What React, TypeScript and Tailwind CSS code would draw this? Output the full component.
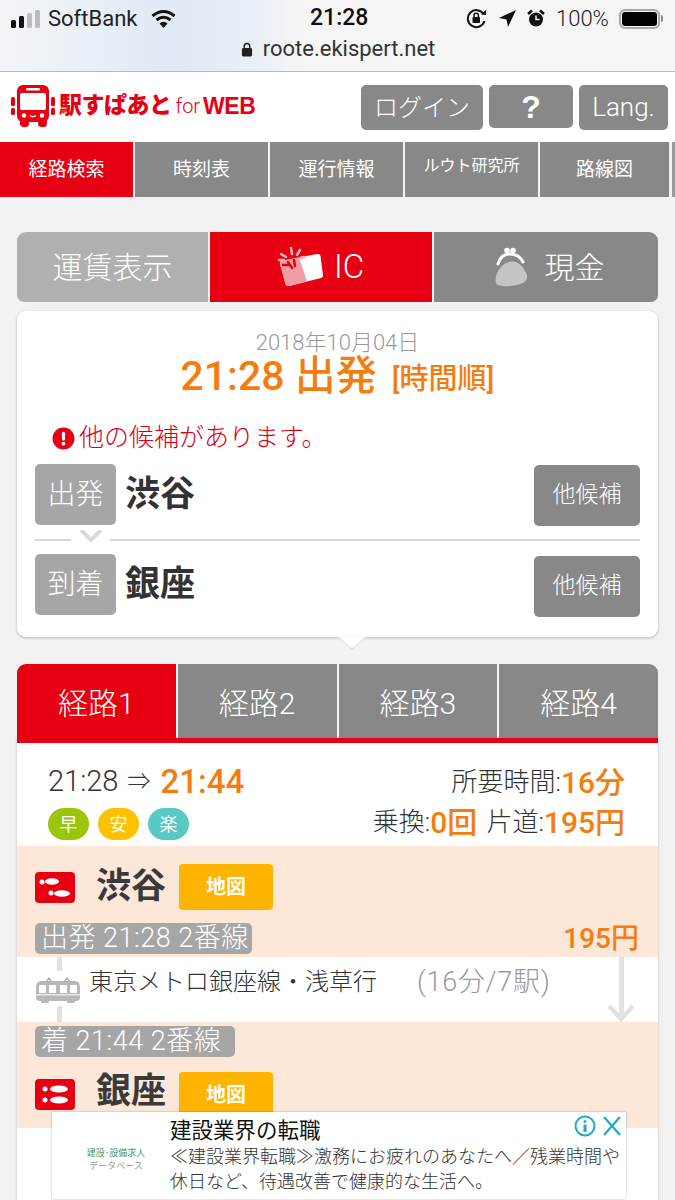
const jp = "font-['Roboto','Noto_Sans_CJK_JP',sans-serif]"

function BusLogo() {
  return (
    <svg width="44" height="42" viewBox="0 0 44 42" className="shrink-0">
      <rect x="0" y="12" width="4" height="9" rx="1.500" fill="#e60012" />
      <rect x="0" y="23" width="4" height="7" rx="1.500" fill="#e60012" />
      <rect x="40" y="12" width="4" height="9" rx="1.500" fill="#e60012" />
      <rect x="40" y="23" width="4" height="7" rx="1.500" fill="#e60012" />
      <rect x="9" y="34" width="9" height="8" rx="3.500" fill="#e60012" />
      <rect x="27" y="34" width="9" height="8" rx="3.500" fill="#e60012" />
      <rect x="6" y="0" width="32" height="37" rx="6" fill="#e60012" />
      <rect x="15" y="3" width="14" height="2.500" rx="1" fill="#fff" />
      <rect x="9" y="8" width="26" height="17" rx="2" fill="#fff" />
      <circle cx="13" cy="30.500" r="2.200" fill="#fff" />
      <circle cx="31" cy="30.500" r="2.200" fill="#fff" />
      <path d="M19 30.500 Q22 33 25 30.500" stroke="#fff" strokeWidth="1.300" fill="none" />
    </svg>
  )
}

function IcCard() {
  return (
    <svg width="46" height="42" viewBox="0 0 46 42">
      <path d="M4 15 L40 8 Q43 7.500 43.500 10 L46 29 Q46.300 31.500 44 32 L12 40 Q9 40.500 8.500 38 L3 18 Q2.500 15.500 4 15 Z" fill="#fff" />
      <path d="M4 15 L22 11.500 L30 35.500 L12 40 Q9 40.500 8.500 38 L3 18 Q2.500 15.500 4 15 Z" fill="#f29ca5" />
      <g stroke="#e60012" strokeWidth="2.500" strokeLinecap="round">
        <path d="M6 19 L12 19" />
        <path d="M11 16 L15 22" />
        <path d="M17 14 L18 20" />
      </g>
      <g stroke="#f7b4ba" strokeWidth="2.500" strokeLinecap="round">
        <path d="M4 8 L9 11" />
        <path d="M2 14 L7 14" />
        <path d="M14 2 L15 8" />
        <path d="M23 4 L20 9" />
        <path d="M28 11 L23 12" />
      </g>
    </svg>
  )
}

function Purse() {
  return (
    <svg width="36" height="40" viewBox="0 0 36 40">
      <circle cx="12" cy="3.500" r="2.800" fill="#fff" />
      <circle cx="18" cy="3.500" r="2.800" fill="#fff" />
      <path d="M3 17 Q6 7 15 7 Q24 7 28 15" stroke="#fff" strokeWidth="3" fill="none" strokeLinecap="round" />
      <path d="M14 15 C22 13 27 19 30 24 C35 31 31 36 22 38 C12 40 3 40 1 36 C-1 29 5 17 14 15 Z" fill="#c4c4c4" />
    </svg>
  )
}

function Steps({ top }: { top?: boolean }) {
  return (
    <svg width="40" height="31" viewBox="0 0 40 31" className="shrink-0">
      <rect width="40" height="31" rx="4" fill="#e60012" />
      {top ? (
        <g fill="#fff">
          <circle cx="7" cy="10" r="2.500" />
          <ellipse cx="17" cy="9.500" rx="7" ry="3.200" />
          <circle cx="16" cy="21" r="2.500" />
          <ellipse cx="27" cy="21.500" rx="8" ry="3.200" />
        </g>
      ) : (
        <g fill="#fff">
          <circle cx="10" cy="10" r="2.500" />
          <ellipse cx="24" cy="10" rx="9" ry="3.500" />
          <circle cx="10" cy="21" r="2.500" />
          <ellipse cx="24" cy="21" rx="9" ry="3.500" />
        </g>
      )}
    </svg>
  )
}

function Train() {
  return (
    <svg width="44" height="27" viewBox="0 0 44 27" className="shrink-0">
      <path d="M10 6 L13 2 L16 6 M28 6 L31 2 L34 6" stroke="#b5b5b5" strokeWidth="1.500" fill="none" />
      <path d="M5 5 H39 Q44 5 44 12 V21 Q44 25 40 25 H4 Q0 25 0 21 V12 Q0 5 5 5 Z" fill="#b8b8b8" />
      <rect x="3" y="9" width="7" height="8" rx="1" fill="#fff" />
      <rect x="13" y="9" width="7" height="8" fill="#fff" />
      <rect x="24" y="9" width="7" height="8" fill="#fff" />
      <rect x="34" y="9" width="7" height="8" rx="1" fill="#fff" />
      <rect x="0" y="18" width="44" height="1.500" fill="#e8e8e8" />
      <rect x="5" y="24" width="8" height="3" rx="1.500" fill="#b8b8b8" />
      <rect x="31" y="24" width="8" height="3" rx="1.500" fill="#b8b8b8" />
    </svg>
  )
}

function NavTab({ label, active, small }: { label: string; active?: boolean; small?: boolean }) {
  return (
    <div
      className={`flex h-full w-[133px] shrink-0 justify-center text-white ${active ? 'bg-[#e60012]' : 'bg-[#888888]'} ${small ? 'pt-[12px] text-[16px]' : 'items-center pt-[2px] text-[19px]'}`}
    >
      {label}
    </div>
  )
}

function RouteTab({ label, active }: { label: string; active?: boolean }) {
  return (
    <div className={`flex flex-1 items-center justify-center pt-[5px] text-[30px] font-light text-white ${active ? 'bg-[#e60012]' : 'bg-[#888888]'}`}>
      {label}
    </div>
  )
}

function Badge({ label, color }: { label: string; color: string }) {
  return (
    <div className={`flex h-[32px] w-[41px] items-center justify-center rounded-full text-[18px] text-white ${color}`}>
      {label}
    </div>
  )
}

function StationRow({ tag, name, btnTop }: { tag: string; name: string; btnTop: string }) {
  return (
    <div className="flex items-start">
      <div className="flex h-[61px] w-[81px] items-center justify-center rounded-[5px] bg-[#a6a6a6] text-[28px] font-light text-white">{tag}</div>
      <div className="ml-[9px] mt-[10px] text-[35px] leading-[42px] font-bold text-[#333333]">{name}</div>
      <div className={`ml-auto flex h-[61px] w-[106px] items-center justify-center rounded-[5px] bg-[#888888] text-[23px] font-light text-white ${btnTop}`}>
        他候補
      </div>
    </div>
  )
}

export default function App() {
  return (
    <div className={`relative h-[1200px] w-[675px] overflow-hidden bg-[#f2f2f2] ${jp}`}>
      {/* ステータスバー */}
      <div className="h-[72px] border-b border-[#b9b9b9] bg-[linear-gradient(90deg,#f3f5f7_0%,#dfeaf6_25%,#e6eef7_35%,#f5f5f5_45%)] text-[#222222]">
        <div className="flex h-[37px] items-center pl-[11px]">
          <div className="flex items-end gap-[3px]">
            <span className="h-[8px] w-[5px] rounded-[1.500px] bg-[#111111]" />
            <span className="h-[12px] w-[5px] rounded-[1.500px] bg-[#111111]" />
            <span className="h-[15px] w-[5px] rounded-[1.500px] bg-[#bcbcbc]" />
            <span className="h-[18px] w-[5px] rounded-[1.500px] bg-[#bcbcbc]" />
          </div>
          <span className="ml-[8px] w-[90px] text-[22px] whitespace-nowrap">SoftBank</span>
          <svg width="25" height="19" viewBox="0 0 25 19" className="ml-[13px]">
            <path d="M12.500 19 L8.500 14.500 Q12.500 11 16.500 14.500 Z" fill="#111" />
            <path d="M5.500 11 Q12.500 5.500 19.500 11" stroke="#111" strokeWidth="3" fill="none" />
            <path d="M1.500 7 Q12.500 -2 23.500 7" stroke="#111" strokeWidth="3" fill="none" />
          </svg>
          <span className="ml-[134px] w-[58px] text-[23px] font-medium whitespace-nowrap text-[#111111]">21:28</span>
          <svg width="21" height="21" viewBox="0 0 21 21" className="ml-[98px]">
            <path d="M17.500 6 A8.500 8.500 0 1 0 18.500 13" stroke="#111" strokeWidth="2" fill="none" />
            <path d="M15 6.500 L20 7 L20 2 Z" fill="#111" />
            <rect x="6.500" y="9" width="7.500" height="6" rx="1" fill="#111" />
            <path d="M8 9 V7.500 a2.200 2.200 0 0 1 4.400 0 V9" stroke="#111" strokeWidth="1.500" fill="none" />
          </svg>
          <svg width="17" height="17" viewBox="0 0 17 17" className="ml-[12px]">
            <path d="M17 0 L0 8 L7.500 9.500 L9 17 Z" fill="#111" />
          </svg>
          <svg width="18" height="19" viewBox="0 0 18 19" className="ml-[11px]">
            <circle cx="9" cy="10.500" r="7" fill="#111" />
            <path d="M9 6.500 V10.500 H12.500" stroke="#f5f5f5" strokeWidth="1.500" fill="none" />
            <path d="M1 5 L5 1.500 M17 5 L13 1.500" stroke="#111" strokeWidth="2.500" />
          </svg>
          <span className="ml-[11px] w-[55px] text-[22px] font-light whitespace-nowrap">100%</span>
          <div className="ml-[8px] flex h-[20px] w-[41px] items-center rounded-[6px] border-2 border-[#a8a8a8] p-[1px]">
            <div className="h-full w-full rounded-[3px] bg-black" />
          </div>
          <span className="ml-[1px] h-[7px] w-[2px] rounded-r-[2px] bg-[#888888]" />
        </div>
        <div className="flex items-center justify-center gap-[10px] pl-[1px] text-[22px] leading-[24px] text-[#333333]">
          <svg width="12" height="17" viewBox="0 0 13 17">
            <rect x="1" y="7" width="11" height="9" rx="1.500" fill="#222" />
            <path d="M3.500 7 V5 a3 3 0 0 1 6 0 V7" stroke="#222" strokeWidth="1.600" fill="none" />
          </svg>
          roote.ekispert.net
        </div>
      </div>

      {/* ヘッダー */}
      <div className="flex h-[70px] items-start bg-white pl-[11px] pr-[7px]">
        <div className="mt-[13px] flex items-center">
          <BusLogo />
          <span className="ml-[4px] text-[23px] leading-[34px] font-black tracking-[-0.500px] whitespace-nowrap text-[#e60012]">駅すぱあと</span>
          <span className="ml-[4px] text-[20px] font-light text-[#e60012]">for</span>
          <span className="ml-[3px] font-['Liberation_Sans',sans-serif] text-[23px] font-bold tracking-[-0.500px] text-[#e60012]">WEB</span>
        </div>
        <div className="ml-auto mt-[13px] flex gap-[6px] text-white">
          <div className="flex h-[45px] w-[122px] items-center justify-center rounded-[5px] bg-[#888888] text-[24px] font-light">ログイン</div>
          <div className="flex h-[43px] w-[84px] items-center justify-center rounded-[5px] bg-[#888888] font-['Liberation_Sans',sans-serif] text-[32px] font-bold">?</div>
          <div className="flex h-[45px] w-[89px] items-center justify-center rounded-[5px] bg-[#888888] text-[26px] font-light">Lang.</div>
        </div>
      </div>

      {/* ナビ */}
      <div className="flex h-[55px] gap-[2px]">
        <NavTab label="経路検索" active />
        <NavTab label="時刻表" />
        <NavTab label="運行情報" />
        <NavTab label="ルウト研究所" small />
        <div className="flex h-full w-[129px] items-center justify-center bg-[#888888] pt-[2px] text-[19px] text-white">路線図</div>
        <div className="ml-[1px] h-full w-[3px] bg-[#999999]" />
      </div>

      <div className="px-[17px] pt-[35px]">
        {/* 運賃表示 */}
        <div className="flex h-[70px] gap-[2px] overflow-hidden rounded-t-[9px] rounded-b-[7px] text-white">
          <div className="flex w-[191px] items-center justify-center bg-[#b0b0b0] text-[30px] font-light">運賃表示</div>
          <div className="flex w-[222px] items-center justify-center gap-[11px] bg-[#e60012] pr-[1px] text-[33px] font-light">
            <IcCard />
            IC
          </div>
          <div className="flex flex-1 items-center justify-center gap-[14px] pl-[7px] bg-[#888888] text-[30px] font-light">
            <Purse />
            現金
          </div>
        </div>

        {/* 検索条件 */}
        <div className="relative mt-[9px] h-[326px] rounded-[9px] bg-white px-[18px] shadow-[0_1px_3px_rgba(0,0,0,0.25)]">
          <div className="pt-[19px] text-center text-[22px] leading-[26px] font-light whitespace-nowrap text-[#9a9a9a]">2018年10月04日</div>
          <div className="flex h-[42px] items-center justify-center gap-[15px] font-medium whitespace-nowrap text-[#f57c0f]">
            <span className="text-[41px]">21:28 出発</span>
            <span className="mt-[5px] text-[29px]">[時間順]</span>
          </div>
          <div className="mt-[23px] mb-[-2px] flex h-[34px] items-center pl-[17px] text-[25px] font-light text-[#d7001a]">
            <svg width="23" height="23" viewBox="0 0 22 22" className="mr-[4px]">
              <circle cx="11" cy="11" r="10.500" fill="#e60012" />
              <rect x="9.500" y="4.500" width="3" height="8.500" rx="1.500" fill="#fff" />
              <circle cx="11" cy="16" r="1.800" fill="#fff" />
            </svg>
            他の候補があります。
          </div>
          <div className="mt-[11px]">
            <StationRow tag="出発" name="渋谷" btnTop="mt-[1px]" />
          </div>
          <div className="relative mt-[13px] h-[2px] bg-[#d9d9d9]">
            <div className="absolute top-[-9px] left-[36px] flex h-[20px] w-[39px] justify-center bg-white">
              <svg width="24" height="13" viewBox="0 0 24 13">
                <path d="M2 0 L12 10 L22 0" stroke="#d9d9d9" strokeWidth="4" fill="none" />
              </svg>
            </div>
          </div>
          <div className="mt-[13px]">
            <StationRow tag="到着" name="銀座" btnTop="mt-[2px]" />
          </div>
          <svg width="30" height="14" viewBox="0 0 30 14" className="absolute top-[325px] left-[320px]">
            <path d="M0 0 L15 13 L30 0 Z" fill="#fff" stroke="#d8d8d8" />
            <rect x="0" y="-1" width="30" height="1.500" fill="#fff" />
          </svg>
        </div>

        {/* 経路タブ */}
        <div className="mt-[27px] flex h-[74px] gap-[2px] overflow-hidden rounded-t-[9px]">
          <RouteTab label="経路1" active />
          <RouteTab label="経路2" />
          <RouteTab label="経路3" />
          <RouteTab label="経路4" />
        </div>

        {/* 経路詳細 */}
        <div className="h-[500px] border-t-[5px] border-[#e60012] bg-white shadow-[0_0_3px_rgba(0,0,0,0.2)]">
          <div className="flex h-[103px] justify-between pt-[20px] pr-[33px] pl-[31px]">
            <div>
              <div className="flex h-[38px] items-center whitespace-nowrap text-[29px] font-light text-[#333333]">
                21:28
                <span className="ml-[9px] text-[23px]">⇒</span>
                <span className="ml-[10px] text-[33px] font-medium text-[#f57c0f]">21:44</span>
              </div>
              <div className="mt-[7px] flex gap-[9px]">
                <Badge label="早" color="bg-[#9bc40c]" />
                <Badge label="安" color="bg-[#ffc000]" />
                <Badge label="楽" color="bg-[#58c9c4]" />
              </div>
            </div>
            <div className="flex flex-col items-end whitespace-nowrap text-[26px] font-light text-[#333333]">
              <div className="flex h-[38px] items-center">
                所要時間:<span className="text-[30px] font-medium text-[#f57c0f]">16分</span>
              </div>
              <div className="mt-[2px] flex h-[38px] items-center">
                乗換:<span className="mr-[9px] text-[30px] font-medium text-[#f57c0f]">0回</span>片道:
                <span className="text-[30px] font-medium text-[#f57c0f]">195円</span>
              </div>
            </div>
          </div>

          <div className="h-[111px] bg-[#fce7d9] pr-[19px] pl-[18px]">
            <div className="flex items-center pt-[18px]">
              <Steps top />
              <span className="ml-[21px] text-[35px] leading-[40px] font-bold text-[#3a3a3a]">渋谷</span>
              <div className="ml-[13px] flex h-[46px] w-[94px] items-center justify-center rounded-[4px] bg-[#ffb400] text-[20px] font-bold text-white">地図</div>
            </div>
            <div className="mt-[13px] flex h-[31px] items-center justify-between">
              <div className="flex h-full items-center rounded-[5px] bg-[#a6a6a6] pr-[3px] pl-[6px] text-[27px] font-light tracking-[0.500px] whitespace-nowrap text-white">出発 21:28 2番線</div>
              <div className="text-[28px] font-medium text-[#f57c0f]">195円</div>
            </div>
          </div>

          <div className="relative flex h-[65px] items-center pl-[19px]">
            <div className="absolute top-0 left-[40px] h-[14px] w-[5px] bg-[#e2e2e2]" />
            <div className="absolute bottom-0 left-[40px] h-[16px] w-[5px] bg-[#e2e2e2]" />
            <div className="absolute top-0 right-[34px] h-[62px] w-[5px] bg-[#e2e2e2]" />
            <svg width="28" height="18" viewBox="0 0 28 18" className="absolute right-[23px] bottom-0">
              <path d="M2 2 L14 15 L26 2" stroke="#e2e2e2" strokeWidth="4.500" fill="none" />
            </svg>
            <Train />
            <span className="mb-[15px] ml-[9px] text-[24px] font-light whitespace-nowrap text-[#333333]">東京メトロ銀座線・浅草行</span>
            <span className="mb-[15px] ml-[40px] text-[27px] font-light tracking-[0.800px] whitespace-nowrap text-[#9a9a9a]">(16分/7駅)</span>
          </div>

          <div className="h-[106px] bg-[#fce7d9] pl-[18px]">
            <div className="flex h-[35px] items-end">
              <div className="flex h-[31px] items-center rounded-[5px] bg-[#a6a6a6] pr-[14px] pl-[6px] text-[27px] font-light tracking-[0.500px] whitespace-nowrap text-white">着 21:44 2番線</div>
            </div>
            <div className="mt-[15px] flex items-start">
              <div className="mt-[7px]">
                <Steps />
              </div>
              <span className="ml-[21px] text-[35px] leading-[40px] font-bold text-[#3a3a3a]">銀座</span>
              <div className="ml-[13px] flex h-[46px] w-[94px] items-center justify-center rounded-[4px] bg-[#ffb400] text-[20px] font-bold text-white">地図</div>
            </div>
          </div>
        </div>
      </div>

      {/* 広告 */}
      <div className="absolute top-[1112px] left-[52px] flex h-[87px] w-[574px] bg-white shadow-[0_0_2px_rgba(0,0,0,0.3)]">
        <div className="flex w-[118px] shrink-0 flex-col items-center pt-[35px] pl-[10px] text-[9px] leading-[13px] whitespace-nowrap">
          <span className="text-[#4c9a72]">建設･設備求人</span>
          <span className="text-[#9a9a9a]">データベース</span>
        </div>
        <div className="relative flex-1 text-[#333333]">
          <div className="pt-[5px] text-[21.500px] leading-[27px] text-[#111111]">建設業界の転職</div>
          <div className="text-[18px] leading-[25px] font-light whitespace-nowrap">
            ≪建設業界転職≫激務にお疲れのあなたへ／残業時間や
            <br />
            休日など、待遇改善で健康的な生活へ。
          </div>
          <div className="absolute top-[3px] right-[5px] flex items-center gap-[7px]">
            <svg width="22" height="22" viewBox="0 0 22 22">
              <circle cx="11" cy="11" r="9.500" stroke="#1fa9c9" strokeWidth="2" fill="none" />
              <circle cx="11" cy="6.500" r="1.500" fill="#1fa9c9" />
              <rect x="9.500" y="9.500" width="3" height="7.500" fill="#1fa9c9" />
            </svg>
            <svg width="18" height="20" viewBox="0 0 18 20">
              <path d="M1 1 L17 19 M17 1 L1 19" stroke="#1fa9c9" strokeWidth="2.200" />
            </svg>
          </div>
        </div>
      </div>
    </div>
  )
}
